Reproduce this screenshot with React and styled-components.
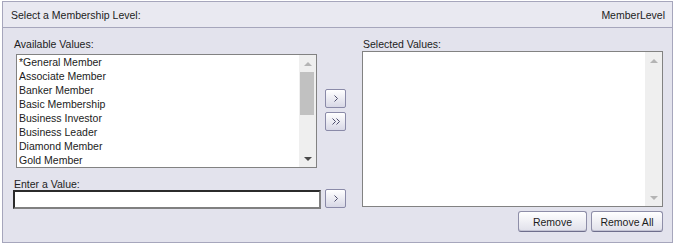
import styled, { createGlobalStyle } from "styled-components";

const GlobalStyle = createGlobalStyle`
  body {
    margin: 0;
    background: #ffffff;
    font-family: "Liberation Sans", Arial, sans-serif;
  }
`;

const Panel = styled.div`
  box-sizing: border-box;
  width: 671px;
  height: 242px;
  margin: 1px 0 0 2px;
  border: 1px solid #a6a6bc;
  background: #e3e3ed;
  display: flex;
  flex-direction: column;
  font-size: 10.5px;
  color: #1c1c1c;
`;

const Header = styled.div`
  height: 24px;
  border-bottom: 1px solid #a6a6bc;
  background: #e9e9f1;
  display: flex;
  align-items: center;
  justify-content: space-between;
  padding: 1px 7px 0 8px;
`;

const Body = styled.div`
  display: flex;
  gap: 16px;
  padding: 10px 9px 0 10px;
`;

const Column = styled.div`
  display: flex;
  flex-direction: column;
  width: ${(p) => p.$width}px;
`;

const Label = styled.div`
  height: ${(p) => p.$h || 13}px;
  line-height: 13px;
  padding-left: 1px;
  margin-top: ${(p) => p.$top || 0}px;
`;

const ListRow = styled.div`
  display: flex;
  gap: 8px;
  margin: 3px 0 0 3px;
`;

const ListBox = styled.div`
  box-sizing: border-box;
  width: 301px;
  height: ${(p) => p.$height}px;
  border: 1px solid #828282;
  background: #ffffff;
  display: flex;
`;

const Items = styled.div`
  flex: 1;
  overflow: hidden;
`;

const Item = styled.div`
  height: 14px;
  line-height: 14px;
  padding-left: 2px;
  white-space: nowrap;
`;

const ScrollBar = styled.div`
  width: 17px;
  background: #efefef;
  display: flex;
  flex-direction: column;
`;

const ScrollArrow = styled.div`
  height: 17px;
  display: flex;
  align-items: center;
  justify-content: center;
  margin-top: ${(p) => (p.$down ? "auto" : "0")};
  &::after {
    content: "";
    width: 0;
    height: 0;
    border-left: 4px solid transparent;
    border-right: 4px solid transparent;
    ${(p) =>
      p.$down
        ? `border-top: 4px solid ${p.$off ? "#b4b4b4" : "#4a4a4a"};`
        : `border-bottom: 4px solid ${p.$off ? "#b4b4b4" : "#4a4a4a"};`}
  }
`;

const Thumb = styled.div`
  height: 43px;
  margin: 0 2px 0 1px;
  background: #c1c1c1;
`;

const ArrowColumn = styled.div`
  display: flex;
  flex-direction: column;
  gap: 4px;
  margin-top: 35px;
`;

const MoveButton = styled.button`
  box-sizing: border-box;
  width: 21px;
  height: 19px;
  padding: 0;
  margin-top: ${(p) => p.$top || 0}px;
  border: 1px solid #8a8aa8;
  border-radius: 2px;
  background: linear-gradient(#ffffff, #d8d8e6);
  display: flex;
  align-items: center;
  justify-content: center;
  cursor: pointer;
`;

const InputRow = styled.div`
  display: flex;
  gap: 4px;
  align-items: flex-start;
`;

const TextInput = styled.input`
  box-sizing: border-box;
  width: 308px;
  height: 19px;
  margin: 0;
  padding: 0 2px;
  border: 2px solid;
  border-color: #2b2b2b #808080 #808080 #2b2b2b;
  background: #ffffff;
  font: inherit;
  outline: none;
`;

const ButtonRow = styled.div`
  display: flex;
  justify-content: flex-end;
  gap: 4px;
  margin-top: 4px;
`;

const TextButton = styled.button`
  box-sizing: border-box;
  width: ${(p) => p.$width}px;
  height: 21px;
  padding: 0;
  border: 1px solid #8e8ea8;
  border-bottom-color: #6e6e8c;
  border-radius: 3px;
  background: linear-gradient(#ffffff, #e0e0ea);
  box-shadow: inset 0 -1px 0 #c4c4d4;
  font: inherit;
  color: #1c1c1c;
  cursor: pointer;
`;

const Chevron = ({ double }) => (
  <svg width={double ? 8 : 4} height="7" viewBox={`0 0 ${double ? 8 : 4} 7`}>
    <polyline points="0.5,0.5 3.5,3.5 0.5,6.5" fill="none" stroke="#4c4c6c" strokeWidth="1" />
    {double && (
      <polyline points="4.5,0.5 7.5,3.5 4.5,6.5" fill="none" stroke="#4c4c6c" strokeWidth="1" />
    )}
  </svg>
);

const available = [
  "*General Member",
  "Associate Member",
  "Banker Member",
  "Basic Membership",
  "Business Investor",
  "Business Leader",
  "Diamond Member",
  "Gold Member",
];

const App = () => {
  return (
    <>
      <GlobalStyle />
      <Panel>
        <Header>
          <span>Select a Membership Level:</span>
          <span>MemberLevel</span>
        </Header>
        <Body>
          <Column $width={333}>
            <Label>Available Values:</Label>
            <ListRow>
              <ListBox $height={114}>
                <Items>
                  {available.map((v) => (
                    <Item key={v}>{v}</Item>
                  ))}
                </Items>
                <ScrollBar>
                  <ScrollArrow $off />
                  <Thumb />
                  <ScrollArrow $down />
                </ScrollBar>
              </ListBox>
              <ArrowColumn>
                <MoveButton title="Add">
                  <Chevron />
                </MoveButton>
                <MoveButton title="Add all">
                  <Chevron double />
                </MoveButton>
              </ArrowColumn>
            </ListRow>
            <Label $top={10} $h={12}>Enter a Value:</Label>
            <InputRow>
              <TextInput type="text" />
              <MoveButton $top={-1} title="Add value">
                <Chevron />
              </MoveButton>
            </InputRow>
          </Column>
          <Column $width={301}>
            <Label>Selected Values:</Label>
            <ListBox $height={156}>
              <Items />
              <ScrollBar>
                <ScrollArrow $off />
                <ScrollArrow $down $off />
              </ScrollBar>
            </ListBox>
            <ButtonRow>
              <TextButton $width={69}>Remove</TextButton>
              <TextButton $width={72}>Remove All</TextButton>
            </ButtonRow>
          </Column>
        </Body>
      </Panel>
    </>
  );
};

export default App;
